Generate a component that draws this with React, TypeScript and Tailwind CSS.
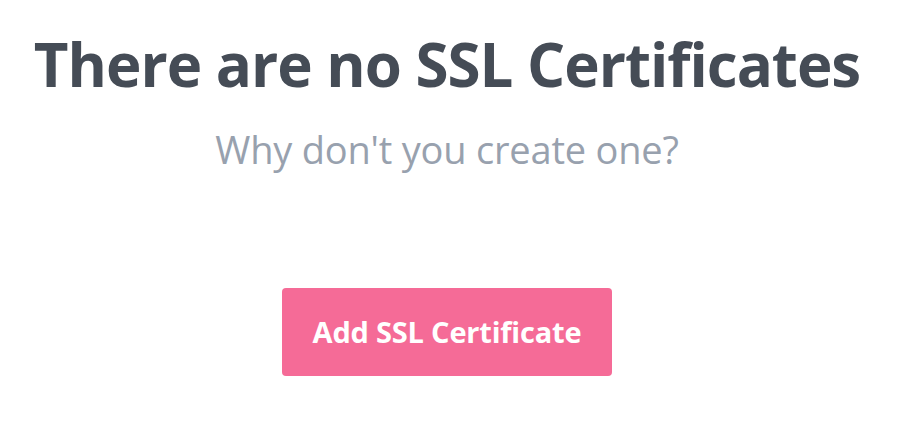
export default function App() {
  return (
    <div className="w-[900px] h-[429px] bg-white flex flex-col items-center pr-[6px]" style={{ fontFamily: '"Open Sans", "Noto Sans", sans-serif' }}>
      <h1 className="mt-[24px] text-[60px] leading-[80px] font-bold text-[#454c56] whitespace-nowrap tracking-[-1px]">There are no SSL Certificates</h1>
      <p className="mt-[20px] text-[38px] leading-[50px] text-[#98a1ae] whitespace-nowrap tracking-[-0.2px]">Why don't you create one?</p>
      <button className="mt-[114px] w-[330px] h-[88px] rounded-[4px] bg-[#f56b97] text-white text-[29px] font-bold tracking-[-0.2px]">Add SSL Certificate</button>
    </div>
  );
}
